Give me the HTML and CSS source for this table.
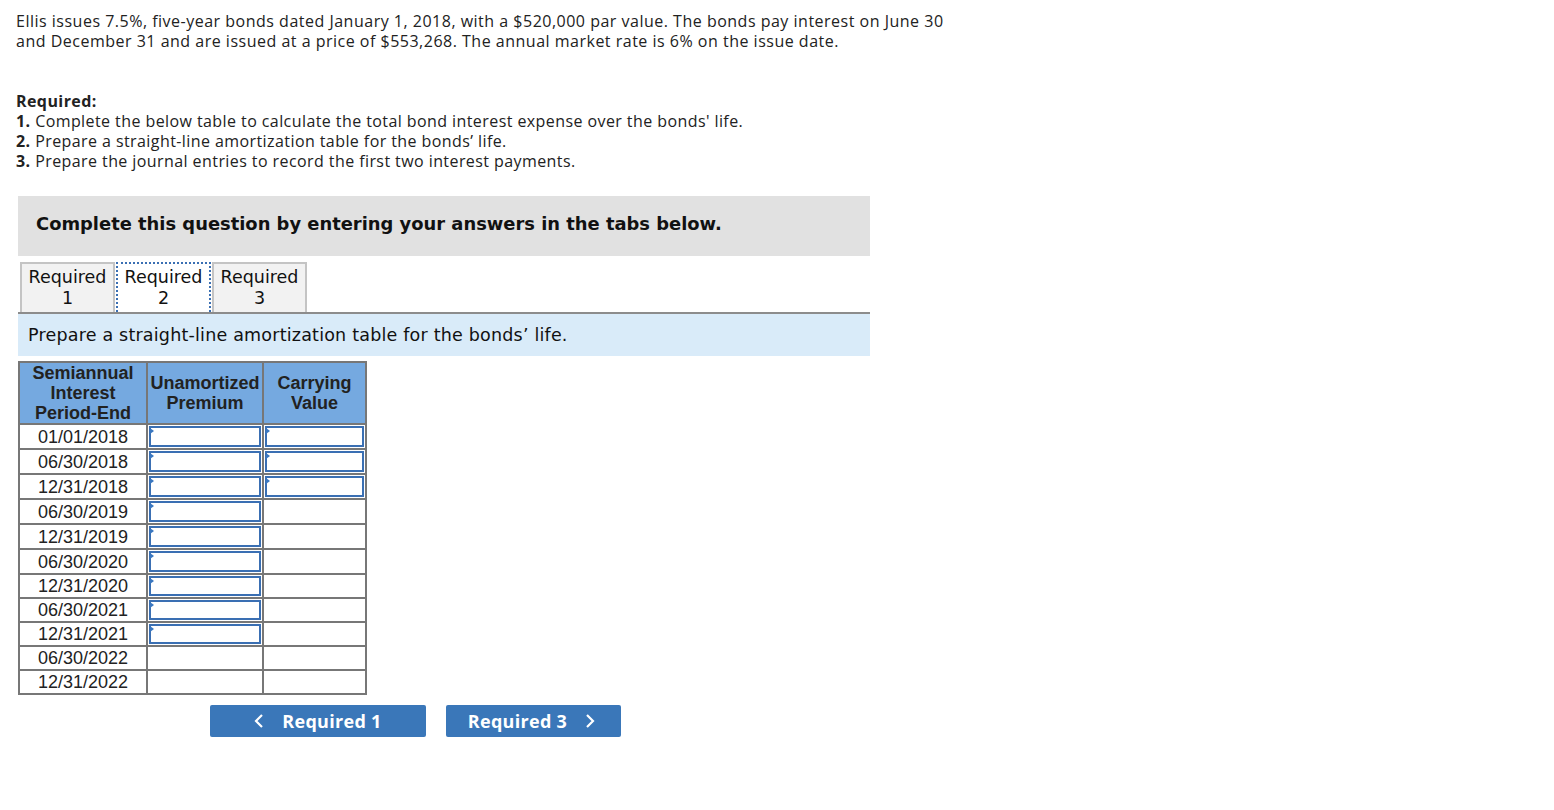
FILE: index.html
```html
<!DOCTYPE html>
<html>
<head>
<meta charset="utf-8">
<link rel="stylesheet" href="styles.css">
</head>
<body>
<div class="page">
  <p class="intro">Ellis issues 7.5%, five-year bonds dated January 1, 2018, with a $520,000 par value. The bonds pay interest on June 30<br>and December 31 and are issued at a price of $553,268. The annual market rate is 6% on the issue date.</p>
  <div class="required">
    <div class="req-title">Required:</div>
    <div><b>1.</b> Complete the below table to calculate the total bond interest expense over the bonds' life.</div>
    <div><b>2.</b> Prepare a straight-line amortization table for the bonds’ life.</div>
    <div><b>3.</b> Prepare the journal entries to record the first two interest payments.</div>
  </div>
  <div class="box">
    <div class="banner"><span>Complete this question by entering your answers in the tabs below.</span></div>
    <div class="tabs">
      <div class="tab">Required<br>1</div>
      <div class="tab active">Required<br>2</div>
      <div class="tab">Required<br>3</div>
    </div>
    <div class="instr">Prepare a straight-line amortization table for the bonds’ life.</div>
    <table class="amort">
      <thead>
        <tr>
          <th class="c1">Semiannual<br>Interest<br>Period-End</th>
          <th class="c2">Unamortized<br>Premium</th>
          <th class="c3">Carrying<br>Value</th>
        </tr>
      </thead>
      <tbody>
        <tr class="tall"><td>01/01/2018</td><td class="in"><div class="field"></div></td><td class="in"><div class="field"></div></td></tr>
        <tr class="tall"><td>06/30/2018</td><td class="in"><div class="field"></div></td><td class="in"><div class="field"></div></td></tr>
        <tr class="tall"><td>12/31/2018</td><td class="in"><div class="field"></div></td><td class="in"><div class="field"></div></td></tr>
        <tr class="tall"><td>06/30/2019</td><td class="in"><div class="field"></div></td><td></td></tr>
        <tr class="tall"><td>12/31/2019</td><td class="in"><div class="field"></div></td><td></td></tr>
        <tr class="tall"><td>06/30/2020</td><td class="in"><div class="field"></div></td><td></td></tr>
        <tr><td>12/31/2020</td><td class="in"><div class="field"></div></td><td></td></tr>
        <tr><td>06/30/2021</td><td class="in"><div class="field"></div></td><td></td></tr>
        <tr><td>12/31/2021</td><td class="in"><div class="field"></div></td><td></td></tr>
        <tr><td>06/30/2022</td><td></td><td></td></tr>
        <tr><td>12/31/2022</td><td></td><td></td></tr>
      </tbody>
    </table>
    <div class="nav">
      <div class="btn prev"><svg width="10" height="16" viewBox="0 0 10 16"><path d="M8 2 L2 8 L8 14" fill="none" stroke="#fff" stroke-width="2.2"/></svg><span>Required 1</span></div>
      <div class="btn next"><span>Required 3</span><svg width="10" height="16" viewBox="0 0 10 16"><path d="M2 2 L8 8 L2 14" fill="none" stroke="#fff" stroke-width="2.2"/></svg></div>
    </div>
  </div>
</div>
</body>
</html>
```
FILE: styles.css
```css
html, body { margin: 0; padding: 0; background: #fff; }
.page {
  padding: 11px 16px;
  font-family: "Open Sans", "Liberation Sans", sans-serif;
  color: #222;
  font-size: 16px;
  letter-spacing: 0.42px;
  line-height: 20px;
}
.intro { margin: 0; letter-spacing: 0.5px; }
.required { margin-top: 40px; }
.req-title { font-weight: bold; }
.box { margin-top: 25px; margin-left: 2px; width: 852px; letter-spacing: 0; }
.banner {
  background: #e1e1e1;
  height: 60px;
  display: flex;
  align-items: center;
  padding-left: 18px;
  padding-bottom: 4px;
  box-sizing: border-box;
  font-family: "DejaVu Sans", Verdana, sans-serif;
  font-weight: bold;
  font-size: 17.9px;
  color: #111;
}
.tabs {
  display: flex;
  margin-top: 6px;
  padding-left: 2px;
  border-bottom: 2px solid #8c8c8c;
}
.tab {
  width: 91px;
  height: 45px;
  border: 2px solid #c4c4c4;
  border-bottom: none;
  background: #f2f2f2;
  text-align: center;
  font-family: "DejaVu Sans", Verdana, sans-serif;
  font-size: 17.5px;
  line-height: 21px;
  padding-top: 3px;
  color: #111;
  margin-right: 1px;
  white-space: nowrap;
}
.tab.active {
  background: #fff;
  border: 2px dotted #3a6fb3;
  border-bottom: none;
}
.instr {
  background: #d9ebf9;
  height: 42px;
  display: flex;
  align-items: center;
  padding-left: 10px;
  font-family: "DejaVu Sans", Verdana, sans-serif;
  font-size: 17.5px;
  letter-spacing: 0.2px;
  color: #111;
}
.amort {
  margin-top: 5px;
  border-collapse: collapse;
  font-family: "Liberation Sans", Arial, sans-serif;
  font-size: 18px;
  color: #222;
}
.amort th, .amort td { border: 2px solid #777; padding: 0; }
.amort th {
  background: #75a9e0;
  font-weight: bold;
  line-height: 20px;
  height: 59px;
  color: #222;
}
.amort .c1 { width: 126px; }
.amort .c2 { width: 114px; }
.amort .c3 { width: 101px; }
.amort td { height: 22px; text-align: center; line-height: 20px; }
.amort tr.tall td { height: 23px; }
.amort td.in { padding: 1px; height: 20px; }
.amort tr.tall td.in { height: 21px; }
.field {
  height: 16px;
  border: 2px solid #3a6fb3;
  position: relative;
  background: #fff;
}
.amort tr.tall .field { height: 17px; }
.field::before {
  content: "";
  position: absolute;
  left: -1px;
  top: 0;
  border-left: 4px solid #3a77c0;
  border-top: 3px solid transparent;
  border-bottom: 3px solid transparent;
}
.nav {
  display: flex;
  gap: 20px;
  margin-top: 10px;
  margin-left: 192px;
}
.btn {
  background: #3a77b9;
  color: #fff;
  height: 32px;
  border-radius: 2px;
  display: flex;
  align-items: center;
  justify-content: center;
  gap: 18px;
  font-family: "Open Sans", "Liberation Sans", sans-serif;
  font-weight: bold;
  font-size: 18px;
  letter-spacing: 0.3px;
}
.btn.prev { width: 216px; }
.btn.next { width: 175px; padding-right: 4px; box-sizing: border-box; }
```
